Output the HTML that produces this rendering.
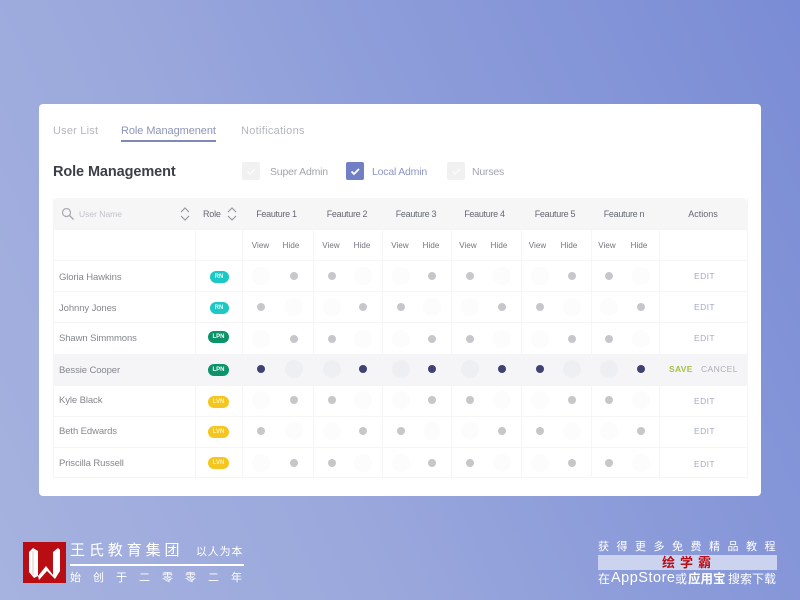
<!DOCTYPE html>
<html lang="zh">
<head>
<meta charset="utf-8">
<title>Role Management</title>
<style>
html,body{margin:0;padding:0}
body{width:800px;height:600px;overflow:hidden;position:relative;background:linear-gradient(65deg,#a6b2df 0%,#9aa8dc 35%,#8a9ad9 65%,#7a8cd5 100%);font-family:"Liberation Sans","Noto Sans CJK SC",sans-serif}
div,span{position:absolute;white-space:nowrap}
.card{left:39px;top:104px;width:722px;height:392px;background:#fff;border-radius:4px}
.t{line-height:12px;transform:translateX(-50%)}
.l{line-height:14px}
.tab{top:124px;font-size:11px;color:#b4b6bd;line-height:14px}
.chk{top:162px;width:18px;height:18px;border-radius:2px;background:#f1f1f2}
.lab{top:165px;font-size:10.500px;color:#a3a5ad;letter-spacing:-.2px;line-height:13px}
.v{width:1px;top:198px;height:280px;background:#f6f6f8}
.h{left:53px;width:694px;height:1px;background:#f5f5f7}
.hd{top:208px;font-size:9px;color:#666871;letter-spacing:-.3px}
.sb{top:240px;font-size:8px;color:#73757d;letter-spacing:.1px}
.n{left:59px;font-size:9.500px;color:#85878e;letter-spacing:-.1px}
.b{left:208px;width:21px;height:12px;border-radius:6px;color:#fff;font-size:6px;font-weight:bold;line-height:12.500px;text-align:center}
.rn{left:209.500px;width:19px;background:#1cc8c4;color:#dff}.lpn{background:#0c9469}.lvn{background:#f4c61f;color:#fff3b5}
.d{width:8px;height:8px;border-radius:50%;background:#c7c7cb;transform:translate(-50%,-50%)}
.k{background:#3f4273}
.g{width:18px;height:18px;border-radius:50%;background:#fcfcfd;transform:translate(-50%,-50%)}
.g2{background:#eeeff2}
.e{font-size:8.500px;color:#a5a9c2;letter-spacing:.4px;left:704.500px;transform:translateX(-50%);line-height:12px}
.cn{color:#fff}
</style>
</head>
<body>
<div class="card"></div>

<div class="tab" style="left:53px;letter-spacing:.2px">User List</div>
<div class="tab" style="left:121px;color:#8d94b8;letter-spacing:-.07px">Role Managmenent</div>
<div style="left:121px;top:140px;width:95px;height:1.500px;background:#8088b8"></div>
<div class="tab" style="left:241px;letter-spacing:.3px">Notifications</div>

<div style="left:53px;top:163px;font-size:14.500px;font-weight:bold;color:#3d3f47;letter-spacing:-.1px;line-height:18px">Role Management</div>

<div class="chk" style="left:242px"><svg width="18" height="18" style="display:block"><path d="M5.500 9.500l2.500 2.500 5-5" fill="none" stroke="#fafafa" stroke-width="1.600"/></svg></div>
<div class="lab" style="left:270px;top:166px">Super Admin</div>
<div class="chk" style="left:346px;background:#717fc4"><svg width="18" height="18" style="display:block"><path d="M5.500 9.500l2.500 2.500 5-5" fill="none" stroke="#fff" stroke-width="1.800"/></svg></div>
<div class="lab" style="left:372px;top:166px;color:#8e95c9">Local Admin</div>
<div class="chk" style="left:447px"><svg width="18" height="18" style="display:block"><path d="M5.500 9.500l2.500 2.500 5-5" fill="none" stroke="#fafafa" stroke-width="1.600"/></svg></div>
<div class="lab" style="left:472px;top:166px">Nurses</div>

<!-- table -->
<div style="left:53px;top:198px;width:694px;height:31px;background:#f6f6f7;border-radius:5px 5px 0 0"></div>
<div style="left:53px;top:354px;width:694px;height:31px;background:#f5f5f8"></div>

<div class="v" style="left:53px"></div><div class="v" style="left:195px"></div><div class="v" style="left:242px"></div><div class="v" style="left:313px"></div><div class="v" style="left:382px"></div><div class="v" style="left:451px"></div><div class="v" style="left:521px"></div><div class="v" style="left:591px"></div><div class="v" style="left:659px"></div><div class="v" style="left:747px"></div>
<div class="h" style="top:229px"></div><div class="h" style="top:260px"></div><div class="h" style="top:291px"></div><div class="h" style="top:322px"></div><div class="h" style="top:385px"></div><div class="h" style="top:416px"></div><div class="h" style="top:447px"></div><div class="h" style="top:477px"></div>

<!-- header -->
<svg style="position:absolute;left:61px;top:207px" width="14" height="14" viewBox="0 0 14 14"><circle cx="5.500" cy="5.500" r="4" fill="none" stroke="#a8a9ae" stroke-width="1.200"/><path d="M8.500 8.500L12.500 12.500" stroke="#a8a9ae" stroke-width="1.400"/></svg>
<div style="left:79px;top:208px;font-size:8.500px;color:#c3c4c8;line-height:12px">User Name</div>
<svg style="position:absolute;left:179px;top:206px" width="12" height="16" viewBox="0 0 12 16"><path d="M2 6l4-4 4 4M2 10l4 4 4-4" fill="none" stroke="#9a9ba1" stroke-width="1.200"/></svg>
<div class="l" style="left:203px;top:207px;font-size:9px;color:#666871;letter-spacing:-.2px">Role</div>
<svg style="position:absolute;left:226px;top:206px" width="12" height="16" viewBox="0 0 12 16"><path d="M2 6l4-4 4 4M2 10l4 4 4-4" fill="none" stroke="#9a9ba1" stroke-width="1.200"/></svg>
<div class="t hd" style="left:276.500px">Feauture 1</div>
<div class="t hd" style="left:347px">Feauture 2</div>
<div class="t hd" style="left:416px">Feauture 3</div>
<div class="t hd" style="left:484.500px">Feauture 4</div>
<div class="t hd" style="left:555px">Feauture 5</div>
<div class="t hd" style="left:624px">Feauture n</div>
<div class="t hd" style="left:703px;letter-spacing:0">Actions</div>

<div class="t sb" style="left:260.500px">View</div><div class="t sb" style="left:291px">Hide</div>
<div class="t sb" style="left:331px">View</div><div class="t sb" style="left:362px">Hide</div>
<div class="t sb" style="left:400px">View</div><div class="t sb" style="left:431px">Hide</div>
<div class="t sb" style="left:468px">View</div><div class="t sb" style="left:499px">Hide</div>
<div class="t sb" style="left:537.500px">View</div><div class="t sb" style="left:569px">Hide</div>
<div class="t sb" style="left:607px">View</div><div class="t sb" style="left:639px">Hide</div>

<!-- names -->
<div class="l n" style="top:271px">Gloria Hawkins</div>
<div class="l n" style="top:302px">Johnny Jones</div>
<div class="l n" style="top:332px">Shawn Simmmons</div>
<div class="l n" style="top:364px">Bessie Cooper</div>
<div class="l n" style="top:394px">Kyle Black</div>
<div class="l n" style="top:425px">Beth Edwards</div>
<div class="l n" style="top:457px">Priscilla Russell</div>

<!-- badges -->
<div class="b rn" style="top:271px">RN</div>
<div class="b rn" style="top:301.500px">RN</div>
<div class="b lpn" style="top:331px">LPN</div>
<div class="b lpn" style="top:363.500px">LPN</div>
<div class="b lvn" style="top:395.500px">LVN</div>
<div class="b lvn" style="top:426px">LVN</div>
<div class="b lvn" style="top:457px">LVN</div>

<!-- row 1 -->
<div class="g" style="left:261px;top:276px"></div><div class="d" style="left:293.500px;top:276px"></div>
<div class="d" style="left:332px;top:276px"></div><div class="g" style="left:363px;top:276px"></div>
<div class="g" style="left:401px;top:276px"></div><div class="d" style="left:432px;top:276px"></div>
<div class="d" style="left:469.500px;top:276px"></div><div class="g" style="left:501.500px;top:276px"></div>
<div class="g" style="left:540px;top:276px"></div><div class="d" style="left:571.500px;top:276px"></div>
<div class="d" style="left:609px;top:276px"></div><div class="g" style="left:641px;top:276px"></div>
<!-- row 2 -->
<div class="d" style="left:261px;top:307px"></div><div class="g" style="left:293.500px;top:307px"></div>
<div class="g" style="left:332px;top:307px"></div><div class="d" style="left:363px;top:307px"></div>
<div class="d" style="left:401px;top:307px"></div><div class="g" style="left:432px;top:307px"></div>
<div class="g" style="left:469.500px;top:307px"></div><div class="d" style="left:501.500px;top:307px"></div>
<div class="d" style="left:540px;top:307px"></div><div class="g" style="left:571.500px;top:307px"></div>
<div class="g" style="left:609px;top:307px"></div><div class="d" style="left:641px;top:307px"></div>
<!-- row 3 -->
<div class="g" style="left:261px;top:339px"></div><div class="d" style="left:293.500px;top:339px"></div>
<div class="d" style="left:332px;top:339px"></div><div class="g" style="left:363px;top:339px"></div>
<div class="g" style="left:401px;top:339px"></div><div class="d" style="left:432px;top:339px"></div>
<div class="d" style="left:469.500px;top:339px"></div><div class="g" style="left:501.500px;top:339px"></div>
<div class="g" style="left:540px;top:339px"></div><div class="d" style="left:571.500px;top:339px"></div>
<div class="d" style="left:609px;top:339px"></div><div class="g" style="left:641px;top:339px"></div>
<!-- row 4 -->
<div class="d k" style="left:261px;top:369px"></div><div class="g g2" style="left:293.500px;top:369px"></div>
<div class="g g2" style="left:332px;top:369px"></div><div class="d k" style="left:363px;top:369px"></div>
<div class="g g2" style="left:401px;top:369px"></div><div class="d k" style="left:432px;top:369px"></div>
<div class="g g2" style="left:469.500px;top:369px"></div><div class="d k" style="left:501.500px;top:369px"></div>
<div class="d k" style="left:540px;top:369px"></div><div class="g g2" style="left:571.500px;top:369px"></div>
<div class="g g2" style="left:609px;top:369px"></div><div class="d k" style="left:641px;top:369px"></div>
<!-- row 5 -->
<div class="g" style="left:261px;top:400px"></div><div class="d" style="left:293.500px;top:400px"></div>
<div class="d" style="left:332px;top:400px"></div><div class="g" style="left:363px;top:400px"></div>
<div class="g" style="left:401px;top:400px"></div><div class="d" style="left:432px;top:400px"></div>
<div class="d" style="left:469.500px;top:400px"></div><div class="g" style="left:501.500px;top:400px"></div>
<div class="g" style="left:540px;top:400px"></div><div class="d" style="left:571.500px;top:400px"></div>
<div class="d" style="left:609px;top:400px"></div><div class="g" style="left:641px;top:400px"></div>
<!-- row 6 -->
<div class="d" style="left:261px;top:431px"></div><div class="g" style="left:293.500px;top:431px"></div>
<div class="g" style="left:332px;top:431px"></div><div class="d" style="left:363px;top:431px"></div>
<div class="d" style="left:401px;top:431px"></div><div class="g" style="left:432px;top:431px"></div>
<div class="g" style="left:469.500px;top:431px"></div><div class="d" style="left:501.500px;top:431px"></div>
<div class="d" style="left:540px;top:431px"></div><div class="g" style="left:571.500px;top:431px"></div>
<div class="g" style="left:609px;top:431px"></div><div class="d" style="left:641px;top:431px"></div>
<!-- row 7 -->
<div class="g" style="left:261px;top:463px"></div><div class="d" style="left:293.500px;top:463px"></div>
<div class="d" style="left:332px;top:463px"></div><div class="g" style="left:363px;top:463px"></div>
<div class="g" style="left:401px;top:463px"></div><div class="d" style="left:432px;top:463px"></div>
<div class="d" style="left:469.500px;top:463px"></div><div class="g" style="left:501.500px;top:463px"></div>
<div class="g" style="left:540px;top:463px"></div><div class="d" style="left:571.500px;top:463px"></div>
<div class="d" style="left:609px;top:463px"></div><div class="g" style="left:641px;top:463px"></div>

<!-- actions -->
<div class="e" style="top:270px">EDIT</div>
<div class="e" style="top:301px">EDIT</div>
<div class="e" style="top:332px">EDIT</div>
<div class="e" style="left:669px;top:363px;transform:none;color:#a6c24a;font-weight:bold;letter-spacing:.3px">SAVE</div>
<div class="e" style="left:701px;top:363px;transform:none;color:#adaeb6">CANCEL</div>
<div class="e" style="top:395px">EDIT</div>
<div class="e" style="top:425px">EDIT</div>
<div class="e" style="top:458px">EDIT</div>

<!-- logo -->
<div style="left:23px;top:542px;width:43px;height:41px;background:#b70d13"></div>
<svg style="position:absolute;left:23px;top:542px" width="43" height="41" viewBox="0 0 43 41"><path d="M6 10L10 6 15 9 15 34 11 36 6 30ZM15 34L23 24 30 33 30 10 35 6 37 8 37 29 32 37 24 29 16 38Z" fill="#fff"/><path d="M10 9V33" stroke="#e6c4c6" stroke-width="1"/></svg>
<div class="cn" style="left:70px;top:541px;font-size:15px;letter-spacing:3.900px;line-height:20px">王氏教育集团</div>
<div class="cn" style="left:196px;top:545px;font-size:11px;letter-spacing:.8px;line-height:14px">以人为本</div>
<div style="left:70px;top:564px;width:174px;height:2px;background:#fff"></div>
<div class="cn" style="left:70px;top:571px;font-size:11px;letter-spacing:12px;line-height:14px">始创于二零零二年</div>

<!-- right promo -->
<div class="cn" style="left:598px;top:540px;font-size:11px;letter-spacing:7.500px;line-height:14px">获得更多免费精品教程</div>
<div style="left:598px;top:555px;width:179px;height:15px;background:#cbd3ef"></div>
<div style="left:662px;top:555px;font-size:13px;font-weight:bold;color:#b80d16;letter-spacing:5px;line-height:15px">绘学霸</div>
<div class="cn" style="left:598px;top:572px;font-size:12px;line-height:14px">在</div>
<div class="cn" style="left:611px;top:570px;font-size:14.500px;line-height:16px;letter-spacing:.5px">AppStore</div>
<div class="cn" style="left:675px;top:572px;font-size:12px;line-height:14px">或</div>
<div class="cn" style="left:688px;top:572px;font-size:12.500px;line-height:14px;font-weight:bold">应用宝</div>
<div class="cn" style="left:728px;top:572px;font-size:12px;line-height:14px">搜索下载</div>
</body>
</html>
